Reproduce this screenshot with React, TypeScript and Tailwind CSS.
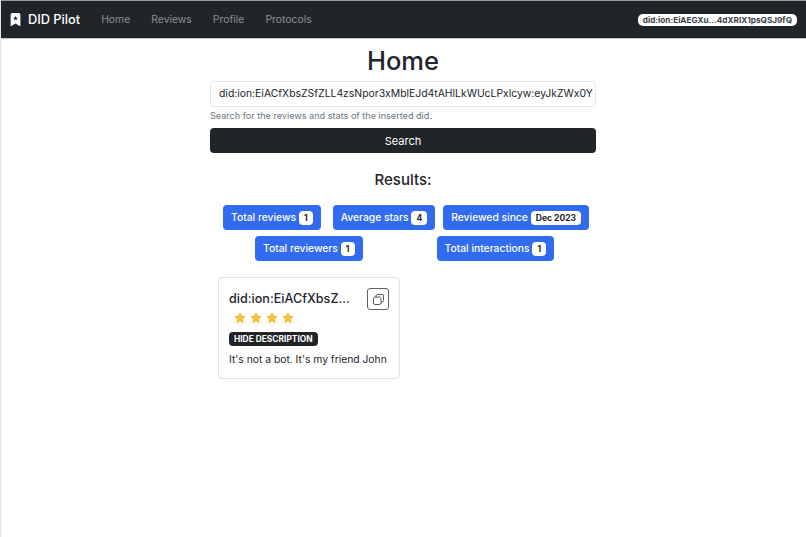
import { Star } from 'lucide-react';
import { BsBookmarkStarFill } from 'react-icons/bs';

const NAV_LINKS = ['Home', 'Reviews', 'Profile', 'Protocols'];

function Stat({ label, value }: { label: string; value: string }): React.ReactElement {
  return (
    <div className="flex h-[25px] items-center rounded-[4px] bg-[#316cf0] px-2 text-[10.3px] font-medium whitespace-nowrap text-white">
      <span>{label}</span>
      <span className="ml-[3px] rounded-[4px] bg-white px-[5px] py-[2px] text-[8.5px] leading-[10px] font-bold text-[#212529]">
        {value}
      </span>
    </div>
  );
}

export default function App(): React.ReactElement {
  return (
    <div className="min-h-[537px] border-l border-[#e5e5e5] bg-white font-['Inter',sans-serif] text-[#212529]">
      <nav className="flex h-[39px] items-center justify-between border-y border-t-[#9a9a9a] border-b-[#c4c4c4] bg-[#212529] px-[9px]">
        <div className="flex items-center">
          <BsBookmarkStarFill size={13} className="-mx-[1px] text-white" />
          <span className="ml-[7px] text-[12.8px] font-medium text-white">DID Pilot</span>
          <div className="ml-[21px] flex gap-[21px] text-[10.4px] text-[#8e9194]">
            {NAV_LINKS.map((link) => (
              <span key={link}>{link}</span>
            ))}
          </div>
        </div>
        <span className="rounded-[5px] bg-white px-[5px] py-[1px] text-[8.2px] leading-[10px] font-bold text-[#3a3f44]">
          did:ion:EiAEGXu...4dXRIX1psQSJ9fQ
        </span>
      </nav>

      <main className="ml-[209px] flex w-[386px] flex-col">
        <h1 className="mt-[2px] text-center text-[25.5px] leading-[40px] font-medium">Home</h1>
        <div className="flex h-[26px] items-center overflow-hidden rounded-[4px] border border-[#e3e5e8] px-2 text-[10.4px] whitespace-nowrap">
          did:ion:EiACfXbsZSfZLL4zsNpor3xMblEJd4tAHlLkWUcLPxlcyw:eyJkZWx0Y
        </div>
        <p className="mt-[2px] text-[9.1px] leading-[14px] text-[#6c757d]">
          Search for the reviews and stats of the inserted did.
        </p>
        <button className="mt-[5px] h-[25px] rounded-[4px] bg-[#212529] pt-[2px] text-[11px] font-normal text-white">
          Search
        </button>
        <h2 className="mt-[17px] text-center text-[15px] leading-[20px] font-medium">Results:</h2>

        <div className="mt-[15px] flex pl-[13px]">
          <Stat label="Total reviews" value="1" />
          <div className="ml-[12px]">
            <Stat label="Average stars" value="4" />
          </div>
          <div className="ml-[8px]">
            <Stat label="Reviewed since" value="Dec 2023" />
          </div>
        </div>
        <div className="mt-[6px] flex pl-[45px]">
          <Stat label="Total reviewers" value="1" />
          <div className="ml-[74px]">
            <Stat label="Total interactions" value="1" />
          </div>
        </div>

        <div className="mt-[16px] ml-[8px] flex h-[102px] w-[182px] flex-col rounded-[4px] border border-[#dfe1e4] px-[10px] pt-[10px]">
          <div className="flex items-center justify-between">
            <span className="text-[12.6px] font-medium">did:ion:EiACfXbsZ...</span>
            <span className="flex h-[22px] w-[22px] items-center justify-center rounded-[3px] border border-[#5c6166]">
              <svg width="11" height="11" viewBox="0 0 11 11" fill="none" stroke="#555a60" strokeWidth="1">
                <rect x="0.5" y="3" width="7.5" height="7.5" rx="1.5" />
                <path d="M3 3V2a1.5 1.5 0 0 1 1.5-1.5H9A1.5 1.5 0 0 1 10.5 2v4.5A1.5 1.5 0 0 1 9 8H8" />
              </svg>
            </span>
          </div>
          <div className="mt-[2px] flex gap-[4px] pl-[5px]">
            {[0, 1, 2, 3].map((i) => (
              <Star key={i} size={12} className="fill-[#f6c143] text-[#f6c143]" />
            ))}
          </div>
          <span className="mt-[8px] w-fit rounded-[4px] bg-[#212529] px-[5px] py-[2px] text-[8.4px] leading-[10px] font-bold text-white">
            HIDE DESCRIPTION
          </span>
          <p className="mt-[6px] text-[10.3px] leading-[14px] whitespace-nowrap">It's not a bot. It's my friend John</p>
        </div>
      </main>
    </div>
  );
}
